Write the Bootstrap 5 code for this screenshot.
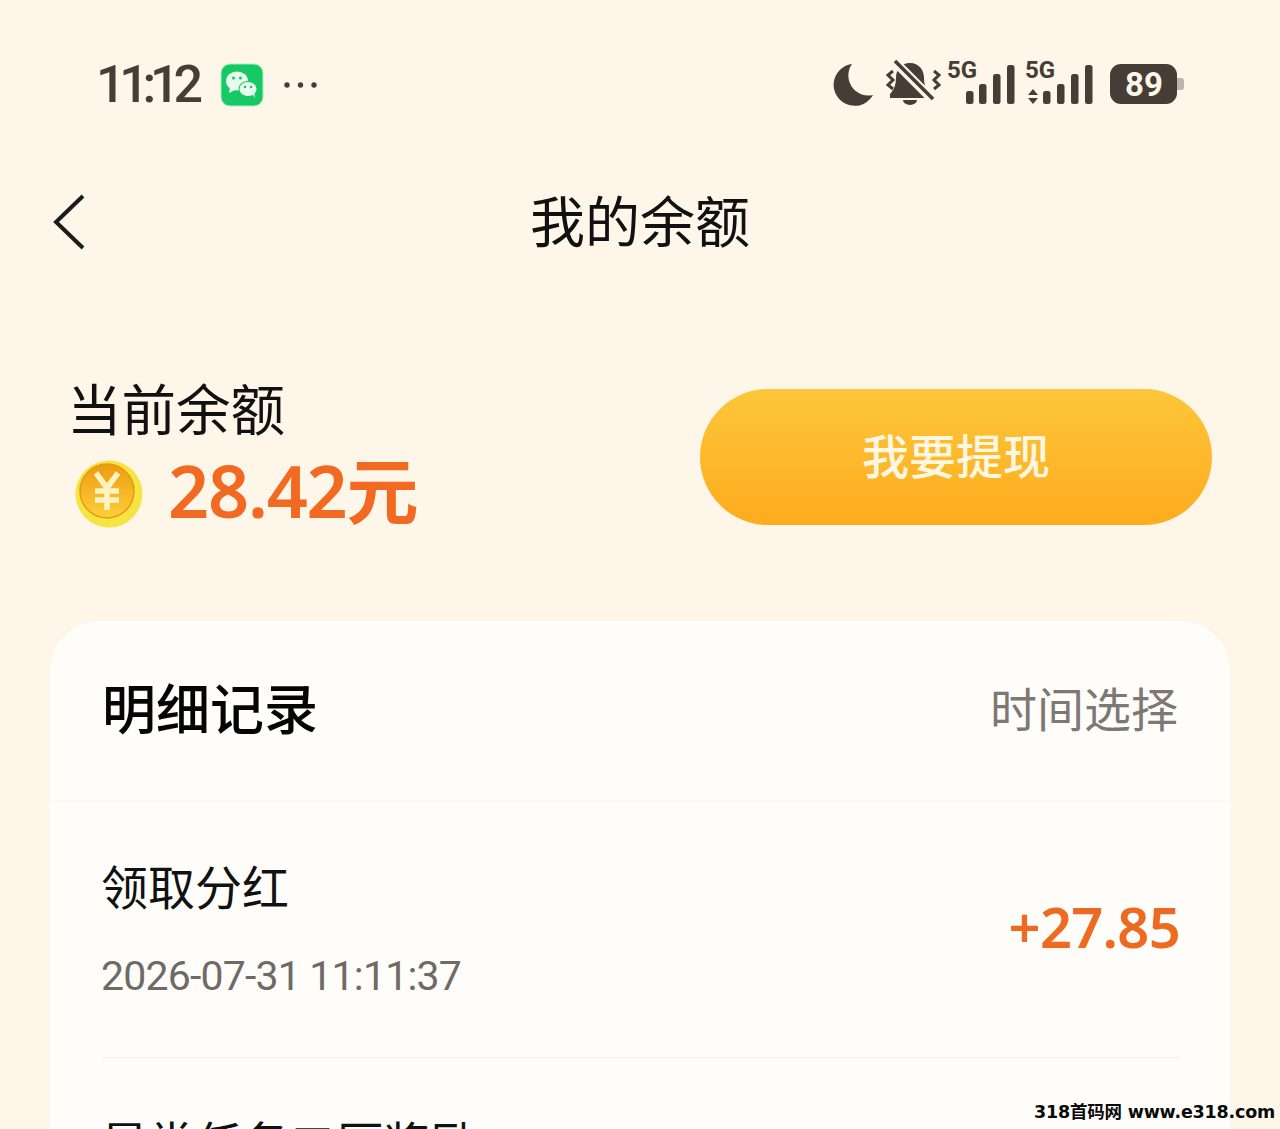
<!DOCTYPE html>
<html lang="zh-CN">
<head>
  <meta charset="UTF-8"><meta name="viewport" content="width=device-width, initial-scale=1">
  <title>我的余额</title>
  <link href="https://cdn.jsdelivr.net/npm/bootstrap@5.3.0/dist/css/bootstrap.min.css" rel="stylesheet">
  <style>
    html,body{height:100%;overflow:hidden}
    body{background:#fef6e8;font-family:"Noto Sans CJK SC","Noto Sans",sans-serif;color:#000}
    .screen{width:1280px;height:1129px;overflow:hidden;position:relative}
    .status-bar{height:85px;margin-top:42px;padding:0 96px}
    .status-time{font-family:Roboto,"Noto Sans",sans-serif;font-size:52px;font-weight:500;color:#453d36;line-height:85px;letter-spacing:-6.250px}
    .wechat-icon{margin-left:22px}
    .title-bar{height:110px;margin-top:40px;padding:0 50px}
    .title-bar h1{font-size:55px;font-weight:400;margin:0;line-height:102px;padding-bottom:8px;color:#111}
    .title-spacer{width:38px}
    .balance-row{margin-top:112px;padding:0 68px 0 67px;height:136px}
    .balance-info{padding-bottom:11px}
    .balance-label{font-size:54.500px;line-height:62px;color:#111;margin-bottom:14px}
    .balance-num{font-family:"Noto Sans","Noto Sans CJK SC",sans-serif;font-size:72px;font-weight:600;color:#f26a21;line-height:76px;letter-spacing:-1.200px}
    .coin{width:68px;height:68px;margin:8px 25px 0 8px}
    .btn-withdraw{width:512px;height:136px;border-radius:68px;border:0;background:linear-gradient(#fdc63a,#fdac1e);color:#fff7e2;font-size:47px;font-weight:500;padding:0 0 6px}
    .detail-card{margin:96px 50px 0;width:1180px;border-radius:50px 50px 0 0;background:#fffdfa;height:600px}
    .detail-head{height:181px;padding:0 52px 7px;border-bottom:1px solid #f8f4ee}
    .detail-head h2{font-size:54px;font-weight:500;margin:0;color:#050505}
    .time-pick{font-size:47px;color:#7d7874}
    .record{height:256px;margin:0 50px 0 51px;border-bottom:1px solid #f4f0ea}
    .record-name{font-size:47px;line-height:60px;color:#111}
    .record-time{font-family:Roboto,"Noto Sans",sans-serif;font-size:41px;line-height:56px;color:#6f6a66;margin-top:33px;letter-spacing:-.8px}
    .record-amount{font-family:"Noto Sans",sans-serif;font-size:56px;font-weight:600;color:#ee6a20;letter-spacing:-.7px;padding-bottom:8px}
    .next-name{margin:53px 0 0 51px;font-size:47px;line-height:60px;color:#111}
    .watermark{position:absolute;right:5px;bottom:5px;font-family:"DejaVu Sans","Noto Sans CJK SC",sans-serif;font-size:17.500px;font-weight:700;line-height:24px;color:#0a0a0a;letter-spacing:-.2px}
  </style>
</head>
<body>
<div class="screen">
  <div class="status-bar d-flex align-items-center justify-content-between">
    <div class="d-flex align-items-center">
      <span class="status-time">11:12</span>
      <svg class="wechat-icon" width="46" height="46" viewBox="0 0 46 46"><rect x="2" y="2" width="42" height="42" rx="9" fill="#17c964" stroke="#a4f0bd" stroke-width="1"/><ellipse cx="18" cy="19" rx="11" ry="9.500" fill="#e8fbef"/><path d="M11 25l-1 6 6-3z" fill="#e8fbef"/><ellipse cx="29" cy="27" rx="9.500" ry="8" fill="#17c964"/><ellipse cx="29" cy="27" rx="8.500" ry="7" fill="#e8fbef"/><path d="M33 32l3 4-1-6z" fill="#e8fbef"/><circle cx="14.500" cy="16" r="1.600" fill="#17c964"/><circle cx="21.500" cy="16" r="1.600" fill="#17c964"/><circle cx="26" cy="25" r="1.300" fill="#17c964"/><circle cx="32" cy="25" r="1.300" fill="#17c964"/></svg>
      <svg class="ms-3" width="38" height="10" viewBox="0 0 38 10"><g fill="#453d36"><circle cx="6" cy="5" r="2.700"/><circle cx="19.500" cy="5" r="2.700"/><circle cx="33" cy="5" r="2.700"/></g></svg>
    </div>
    <svg width="352" height="60" viewBox="0 -4 352 60" fill="#453d36">
      <path d="M20 5A21 21 0 1 0 41 36A20 20 0 0 1 20 5z"/>
      <path d="M78 4c9 0 14 7 14 15 0 8 3 13 6 16v4H58v-4c3-3 6-8 6-16 0-8 5-15 14-15z"/>
      <path d="M71 41a7 5 0 0 0 14 0z"/>
      <path d="M60 0L100 40" stroke="#fef6e8" stroke-width="9"/>
      <path d="M63 2L101 40" stroke="#453d36" stroke-width="3.600"/>
      <path d="M61 12l-5 4 5 5-5 5 5 4M102 12l5 4-5 5 5 5-5 4" fill="none" stroke="#453d36" stroke-width="3"/>
      <text x="115" y="19" font-family="Roboto,sans-serif" font-size="24" font-weight="700">5G</text>
      <rect x="134" y="32" width="7.500" height="13" rx="2.500"/>
      <rect x="147" y="25" width="7.500" height="20" rx="2.500"/>
      <rect x="161" y="15" width="7.500" height="30" rx="2.500"/>
      <rect x="175" y="6" width="7.500" height="39" rx="2.500"/>
      <text x="193" y="19" font-family="Roboto,sans-serif" font-size="24" font-weight="700">5G</text>
      <path d="M196 36l5-6 5 6zM196 39l5 6 5-6z"/>
      <rect x="211" y="32" width="7.500" height="13" rx="2.500"/>
      <rect x="225" y="25" width="7.500" height="20" rx="2.500"/>
      <rect x="239" y="15" width="7.500" height="30" rx="2.500"/>
      <rect x="253" y="6" width="7.500" height="39" rx="2.500"/>
      <rect x="341" y="19" width="11" height="12" rx="3" fill="#bcb5ac"/>
      <rect x="278" y="5" width="67" height="40" rx="11"/>
      <text x="312" y="37" text-anchor="middle" font-family="Roboto,sans-serif" font-size="33" font-weight="700" fill="#fef6e8">89</text>
    </svg>
  </div>

  <div class="title-bar d-flex align-items-center">
    <svg width="38" height="58" viewBox="0 0 38 58"><path d="M33 3L6 29l27 26" fill="none" stroke="#1c1c1c" stroke-width="4"/></svg>
    <h1 class="flex-grow-1 text-center">我的余额</h1>
    <span class="title-spacer"></span>
  </div>

  <div class="balance-row d-flex align-items-center justify-content-between">
    <div class="balance-info">
      <div class="balance-label">当前余额</div>
      <div class="d-flex align-items-center">
        <svg class="coin" viewBox="0 0 68 68">
          <defs><linearGradient id="cg" x1="0" y1="0" x2="0" y2="1"><stop offset="0" stop-color="#ec9c10"/><stop offset="1" stop-color="#ffcf3a"/></linearGradient></defs>
          <circle cx="34" cy="34" r="33.500" fill="#f6e443"/>
          <circle cx="32" cy="31" r="27" fill="url(#cg)" stroke="#e59a13" stroke-width="1.500"/>
          <path d="M21 13l11 15 11-15M20 31h24M20 40h24M32 28v22" fill="none" stroke="#fff3c4" stroke-width="5.500"/>
        </svg>
        <span class="balance-num">28.42元</span>
      </div>
    </div>
    <button class="btn-withdraw" type="button">我要提现</button>
  </div>

  <div class="detail-card">
    <div class="detail-head d-flex align-items-center justify-content-between">
      <h2>明细记录</h2>
      <span class="time-pick">时间选择</span>
    </div>
    <div class="record d-flex align-items-center justify-content-between">
      <div>
        <div class="record-name">领取分红</div>
        <div class="record-time">2026-07-31 11:11:37</div>
      </div>
      <span class="record-amount">+27.85</span>
    </div>
    <div class="next-name">星常任务二压奖励</div>
  </div>
  <div class="watermark">318首码网 www.e318.com</div>
</div>
<script src="https://cdn.jsdelivr.net/npm/bootstrap@5.3.0/dist/js/bootstrap.bundle.min.js"></script>
</body>
</html>
